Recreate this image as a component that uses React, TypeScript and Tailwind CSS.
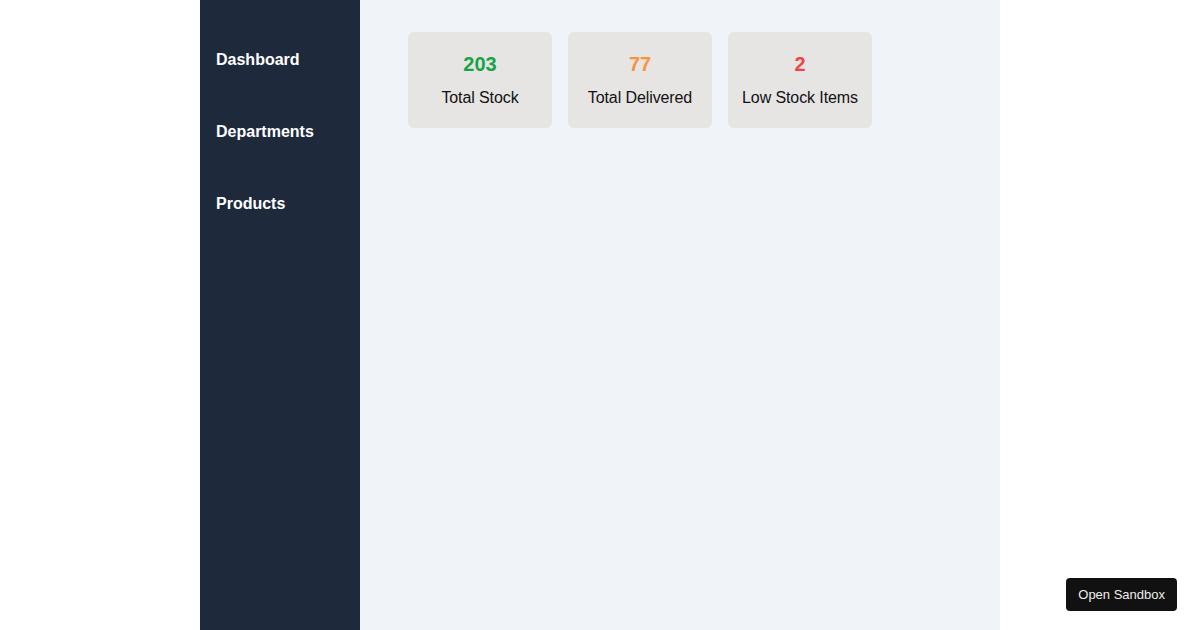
import React from 'react';

const stats = [
    { value: '203', label: 'Total Stock', color: 'text-[#16a34a]' },
    { value: '77', label: 'Total Delivered', color: 'text-[#fb923c]' },
    { value: '2', label: 'Low Stock Items', color: 'text-[#ef4444]' }
];

const navItems = ['Dashboard', 'Departments', 'Products'];

export default function App() {
    return (
        <div className="relative min-h-screen bg-white font-['Liberation_Sans',Arial,sans-serif]">
            <div className="mx-auto flex h-[630px] w-[800px]">
                {/* Sidebar */}
                <aside className="w-[160px] shrink-0 bg-[#1e293b] px-4 pt-[51px]">
                    <ul className="flex flex-col gap-[54px]">
                        {navItems.map((item) => (
                            <li key={item} className="text-base font-bold leading-[18px] text-white">
                                {item}
                            </li>
                        ))}
                    </ul>
                </aside>

                {/* Main */}
                <main className="flex-1 bg-[#f0f4f8] pl-12 pt-8">
                    <div className="flex gap-4">
                        {stats.map((stat) => (
                            <div
                                key={stat.label}
                                className="flex h-[96px] w-[144px] flex-col items-center rounded-md bg-[#e7e5e4] pt-5"
                            >
                                <span className={`text-[20px] font-bold leading-6 ${stat.color}`}>
                                    {stat.value}
                                </span>
                                <span className="mt-[13px] text-base leading-[18px] tracking-[-0.1px] text-[#111]">
                                    {stat.label}
                                </span>
                            </div>
                        ))}
                    </div>
                </main>
            </div>

            <button className="fixed bottom-[19px] right-[23px] rounded bg-[#111] px-3 py-[9px] text-[13px] leading-[15px] text-[#eee]">
                Open Sandbox
            </button>
        </div>
    );
}
